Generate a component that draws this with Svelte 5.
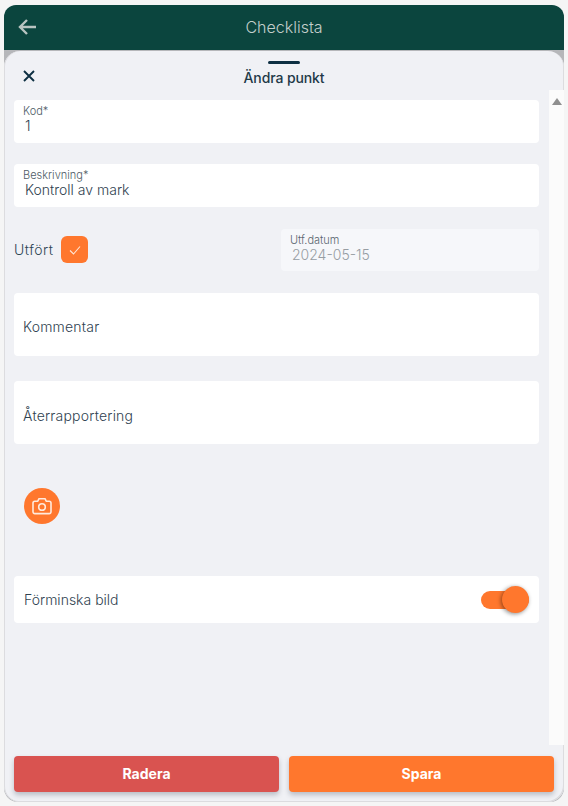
<script lang="ts">
	let done = $state(true);
	let shrink = $state(true);
</script>

<div class="screen">
	<header class="topbar">
		<button class="back" aria-label="Tillbaka">
			<svg width="18" height="16" viewBox="0 0 18 16" fill="none" stroke="currentColor" stroke-width="2.400">
				<path d="M18 8H2M9 1 2 8l7 7" />
			</svg>
		</button>
		<span class="title">Checklista</span>
	</header>

	<div class="backdrop">
		<section class="sheet">
			<div class="handle"></div>
			<div class="sheet-head">
				<button class="close" aria-label="Stäng">
					<svg width="14" height="14" viewBox="0 0 14 14" fill="none" stroke="currentColor" stroke-width="1.900">
						<path d="M2 2l10 10M12 2 2 12" />
					</svg>
				</button>
				<h1>Ändra punkt</h1>
			</div>

			<div class="body">
				<div class="form">
					<div class="field">
						<span class="label">Kod*</span>
						<span class="value">1</span>
					</div>
					<div class="field second">
						<span class="label">Beskrivning*</span>
						<span class="value">Kontroll av mark</span>
					</div>

					<div class="done-row">
						<div class="done">
							<span>Utfört</span>
							<button class="check" aria-label="Utfört" onclick={() => (done = !done)}>
								{#if done}
									<svg width="14" height="12" viewBox="0 0 14 12" fill="none" stroke="currentColor" stroke-width="1.100">
										<path d="M2 6.500 5.500 10 12 2.500" />
									</svg>
								{/if}
							</button>
						</div>
						<div class="field date">
							<span class="label">Utf.datum</span>
							<span class="value">2024-05-15</span>
						</div>
					</div>

					<div class="area">Kommentar</div>
					<div class="area feedback">Återrapportering</div>

					<button class="camera" aria-label="Lägg till bild">
						<svg width="20" height="18" viewBox="0 0 20 18" fill="none" stroke="currentColor" stroke-width="1.600" stroke-linejoin="round">
							<path d="M2.800 4.200h3l1.200-2.500h6l1.200 2.500h3a1.800 1.800 0 0 1 1.800 1.800v8.800a1.800 1.800 0 0 1-1.800 1.800H2.800A1.800 1.800 0 0 1 1 14.800V6a1.800 1.800 0 0 1 1.800-1.800z" />
							<circle cx="10" cy="10" r="3.300" />
						</svg>
					</button>

					<div class="shrink">
						<span>Förminska bild</span>
						<button class="toggle" class:off={!shrink} aria-label="Förminska bild" onclick={() => (shrink = !shrink)}>
							<span class="knob"></span>
						</button>
					</div>
				</div>

				<div class="scrollbar">
					<span class="arrow"></span>
				</div>
			</div>

			<footer class="actions">
				<button class="danger">Radera</button>
				<button class="primary">Spara</button>
			</footer>
		</section>
	</div>
</div>

<style>
	:global(body) {
		margin: 0;
		background: #f5f5f5;
	}

	.screen {
		width: 560px;
		height: 797px;
		margin-left: 4px;
		padding-top: 5px;
		font-family: Inter, "Noto Sans", sans-serif;
		color: #2f4654;
		display: flex;
		flex-direction: column;
	}

	button {
		font-family: inherit;
		border: none;
		padding: 0;
		background: none;
		cursor: pointer;
	}

	.topbar {
		height: 45px;
		flex: none;
		background: #0b453e;
		border-radius: 12px 12px 0 0;
		display: flex;
		align-items: center;
		justify-content: center;
		position: relative;
	}

	.back {
		position: absolute;
		left: 14px;
		top: 14px;
		color: #b9c4c1;
		display: flex;
	}

	.title {
		font-size: 16px;
		font-weight: 300;
		color: #c3cecb;
		margin-top: -1px;
	}

	.backdrop {
		flex: 1;
		background: #b6b7ba;
		padding-top: 1px;
		display: flex;
		border-radius: 0 0 14px 14px;
	}

	.sheet {
		flex: 1;
		background: #f0f1f5;
		border-radius: 16px;
		box-shadow: inset -1px -1px 0 #dcdcdf, inset 1px 0 0 #dcdcdf;
		display: flex;
		flex-direction: column;
		position: relative;
	}

	.handle {
		width: 32px;
		height: 3px;
		margin: 10px auto 0;
		background: #0d2f42;
		border-radius: 2px;
	}

	.sheet-head {
		height: 26px;
		display: flex;
		align-items: center;
		justify-content: center;
		position: relative;
		flex: none;
	}

	.close {
		position: absolute;
		left: 18px;
		top: 5px;
		color: #0d2f42;
		display: flex;
	}

	h1 {
		margin: 0;
		font-size: 14px;
		font-weight: 500;
		letter-spacing: -0.1px;
		color: #1f3a48;
	}

	.body {
		flex: 1;
		display: flex;
		min-height: 0;
	}

	.form {
		width: 525px;
		margin-left: 10px;
		padding-top: 10px;
		display: flex;
		flex-direction: column;
	}

	.field {
		height: 43px;
		box-sizing: border-box;
		background: #fff;
		border-radius: 4px;
		padding: 4px 9px;
		display: flex;
		flex-direction: column;
	}

	.second {
		margin-top: 21px;
	}

	.label {
		font-size: 11px;
		font-weight: 300;
		line-height: 14px;
		color: #4d5b65;
	}

	.value {
		font-size: 14px;
		font-weight: 300;
		line-height: 14px;
		margin-top: 1px;
		padding-left: 2px;
		color: #2f4250;
	}

	.done-row {
		margin-top: 22px;
		display: flex;
		justify-content: space-between;
		align-items: flex-start;
	}

	.done {
		display: flex;
		align-items: center;
		gap: 8px;
		margin-top: 7px;
		font-size: 14px;
		font-weight: 300;
		letter-spacing: 0.5px;
		color: #2f4654;
	}

	.check {
		width: 27px;
		height: 27px;
		border-radius: 6px;
		background: #ff772d;
		color: #ffe6d6;
		display: flex;
		align-items: center;
		justify-content: center;
	}

	.date {
		width: 258px;
		height: 42px;
		background: #f6f7fa;
	}

	.date .label {
		color: #5a666f;
	}

	.date .value {
		color: #979da3;
	}

	.area {
		margin-top: 22px;
		height: 63px;
		box-sizing: border-box;
		background: #fff;
		border-radius: 4px;
		padding: 25px 9px 0;
		font-size: 14px;
		font-weight: 300;
		line-height: 18px;
		letter-spacing: 0.2px;
		color: #2f4250;
	}

	.feedback {
		margin-top: 25px;
		padding-top: 26px;
	}

	.camera {
		width: 36px;
		height: 36px;
		margin: 44px 0 0 10px;
		flex: none;
		border-radius: 50%;
		background: #ff772d;
		color: #ffeadd;
		display: flex;
		align-items: center;
		justify-content: center;
	}

	.shrink {
		margin-top: 52px;
		height: 47px;
		background: #fff;
		border-radius: 4px;
		padding: 0 10px;
		display: flex;
		align-items: center;
		justify-content: space-between;
		font-size: 14px;
		font-weight: 300;
		color: #2f4250;
	}

	.toggle {
		width: 48px;
		height: 18px;
		border-radius: 9px;
		background: #ff772d;
		position: relative;
		display: block;
	}

	.knob {
		position: absolute;
		right: 0;
		top: -4.500px;
		width: 27px;
		height: 27px;
		border-radius: 50%;
		background: #ff772d;
		box-shadow: -1px 1px 4px rgba(0, 0, 0, 0.45);
	}

	.toggle.off {
		background: #c9ccd1;
	}

	.toggle.off .knob {
		right: auto;
		left: 0;
		background: #fff;
	}

	.scrollbar {
		width: 15px;
		margin-left: 10px;
		background: #fbfbfb;
		margin-bottom: 1px;
		display: flex;
		justify-content: center;
		padding-top: 8px;
		box-sizing: border-box;
	}

	.arrow {
		width: 0;
		height: 0;
		border-left: 5px solid transparent;
		border-right: 5px solid transparent;
		border-bottom: 7px solid #8f8f8f;
	}

	.actions {
		flex: none;
		height: 56px;
		box-sizing: border-box;
		padding: 10px 10px 0;
		display: flex;
		gap: 10px;
	}

	.actions button {
		flex: none;
		width: 265px;
		height: 36px;
		padding-bottom: 2px;
		border-radius: 4px;
		color: #fff;
		font-size: 14px;
		font-weight: 700;
		box-shadow: 0 3px 5px rgba(60, 70, 90, 0.3);
	}

	.danger {
		background: #d95350;
	}

	.primary {
		background: #ff772d;
	}
</style>
